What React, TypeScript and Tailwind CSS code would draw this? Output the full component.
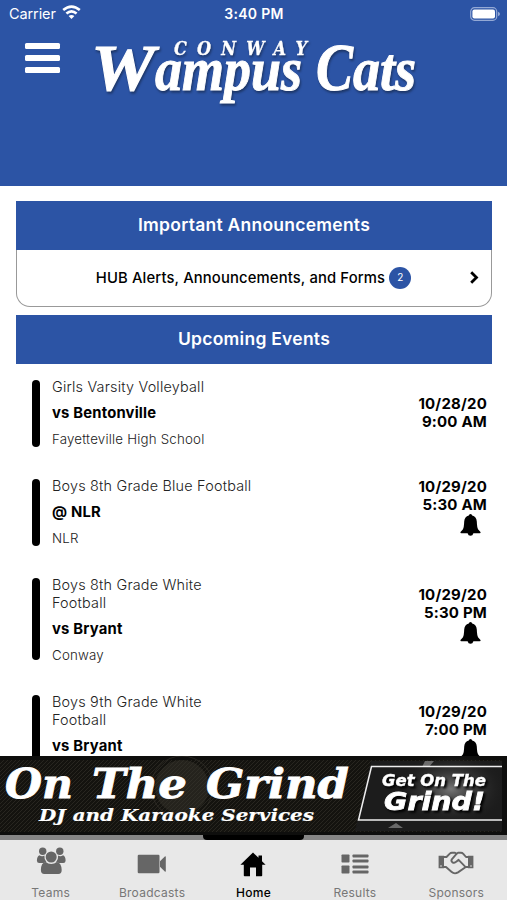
const EVENTS = [
  { title: 'Girls Varsity Volleyball', opponent: 'vs Bentonville', place: 'Fayetteville High School', date: '10/28/20', time: '9:00 AM', bell: false },
  { title: 'Boys 8th Grade Blue Football', opponent: '@ NLR', place: 'NLR', date: '10/29/20', time: '5:30 AM', bell: true },
  { title: 'Boys 8th Grade White Football', opponent: 'vs Bryant', place: 'Conway', date: '10/29/20', time: '5:30 PM', bell: true },
  { title: 'Boys 9th Grade White Football', opponent: 'vs Bryant', place: 'Conway', date: '10/29/20', time: '7:00 PM', bell: true },
]

const TABS = [
  { label: 'Teams', icon: TeamsIcon },
  { label: 'Broadcasts', icon: VideoIcon },
  { label: 'Home', icon: HomeIcon, active: true },
  { label: 'Results', icon: ListIcon },
  { label: 'Sponsors', icon: HandsIcon },
]

function TeamsIcon() {
  return (
    <svg className="-mt-1" width="30" height="28" viewBox="0 0 30 28" fill="currentColor">
      <circle cx="6.7" cy="4.2" r="3.7"/>
      <circle cx="23.8" cy="4.2" r="3.7"/>
      <path d="M3.4 8.3Q6 9.9 8.4 8.6Q8 12.4 10.4 15Q8.4 16 7.4 16.1H3.2Q1 16 .9 13.7Q.9 9.7 3.4 8.3Z"/>
      <path d="M27.1 8.3Q24.5 9.9 22.1 8.6Q22.5 12.4 20.1 15Q22.1 16 23.1 16.1H27.3Q29.5 16 29.6 13.7Q29.6 9.7 27.1 8.3Z"/>
      <circle cx="15.2" cy="10" r="5.5"/>
      <path d="M9.7 15.1Q12 17 15.2 17T20.7 15.1Q25.4 15.8 25.7 23Q25.7 27 22.3 27H8.3Q4.9 27 4.9 23Q5 15.8 9.7 15.1Z"/>
    </svg>
  )
}

function VideoIcon() {
  return (
    <svg className="mt-0.5" width="30" height="20" viewBox="0 0 30 20" fill="currentColor">
      <rect x=".7" y=".7" width="21.8" height="18.5" rx="1.2"/>
      <path d="M23 7.2L27.8 2.4Q28.8 1.8 28.8 3V17Q28.8 18.2 27.8 17.6L23 12.7Z"/>
    </svg>
  )
}

function HomeIcon() {
  return (
    <svg className="mt-[3px]" width="26" height="25" viewBox="0 0 26 25" fill="currentColor">
      <path d="M13 .5L18.5 5.8V3.6H22V9.2L25.6 12.8H22.2V23.5Q22.2 24.2 21.4 24.2H16V15.5H10V24.2H4.6Q3.8 24.2 3.8 23.5V12.8H.4Z"/>
    </svg>
  )
}

function ListIcon() {
  return (
    <svg className="mt-0.5" width="28" height="20" viewBox="0 0 28 20" fill="currentColor">
      <rect x=".5" y=".5" width="8" height="8" rx=".8"/>
      <rect x=".5" y="11.5" width="8" height="8" rx=".8"/>
      <rect x="11.5" y=".5" width="16" height="3" rx=".8"/>
      <rect x="11.5" y="5.5" width="16" height="3" rx=".8"/>
      <rect x="11.5" y="11.5" width="16" height="3" rx=".8"/>
      <rect x="11.5" y="16.5" width="16" height="3" rx=".8"/>
    </svg>
  )
}

function HandsIcon() {
  return (
    <svg width="36" height="24" viewBox="0 0 36 24" fill="none" stroke="currentColor" strokeWidth="1.9" strokeLinejoin="round" strokeLinecap="round">
      <path d="M.6 4.8H6V17.2H.6ZM30 4.8H35.4V17.2H30Z" fill="currentColor" stroke="none"/>
      <path d="M6 6H8.5L11.8 2.6Q12.6 1.8 14 1.8H17L18.5 2.8L20 1.8H23Q24.3 1.8 25.3 2.8L28 6H30"/>
      <path d="M6 16H8L13.4 20.8Q16.5 23.6 20 21.4L27.8 16H30"/>
      <path d="M18.5 2.8L13.8 8.3Q12.8 10 14.4 11.3Q16.6 12.4 18.3 10.7L20.6 8.8L27.4 15.8"/>
      <circle cx="3" cy="15" r=".8" fill="#e8e8e8" stroke="none"/>
      <circle cx="33" cy="15" r=".8" fill="#e8e8e8" stroke="none"/>
    </svg>
  )
}

function BellIcon() {
  return (
    <svg className="mr-[6px] mb-[9px]" width="21" height="22" viewBox="0 0 21 22">
      <path d="M10.5 0Q12 0 12.2 1.6Q16.4 2.8 16.8 7.5Q17 13.6 18.2 15.6L20.5 18Q21 19.2 19.6 19.2H13.4Q12.8 21.8 10.5 21.8T7.6 19.2H1.4Q0 19.2 .5 18L2.8 15.6Q4 13.6 4.2 7.5Q4.6 2.8 8.8 1.6Q9 0 10.5 0Z"/>
    </svg>
  )
}

function StatusBar() {
  return (
    <div className="grid h-7 grid-cols-3 items-center pl-[9px] pr-[7px] text-sm tracking-[0.3px]">
      <div className="flex items-center gap-1.5">
        <span className="text-[14.5px] tracking-[-0.1px]">Carrier</span>
        <svg className="-mt-0.5" width="19" height="15" viewBox="0 0 19 15" fill="none" stroke="#fff" strokeWidth="2.6">
          <path d="M1.2 5.1Q9.5-2 17.8 5.1"/>
          <path d="M4.4 8.6Q9.5 4.2 14.6 8.6"/>
          <path d="M9.5 14L6.6 11Q9.5 8.9 12.4 11Z" fill="#fff" stroke="none"/>
        </svg>
      </div>
      <span className="pr-[1px] text-center font-semibold">3:40 PM</span>
      <svg className="justify-self-end" width="30" height="14" viewBox="0 0 30 14">
        <rect x=".7" y=".7" width="26" height="12.6" rx="3.8" fill="none" stroke="#94a9d5" strokeWidth="1.2"/>
        <rect x="2.4" y="2.4" width="22.6" height="9.2" rx="2" fill="#fff"/>
        <path d="M28 4.7Q30 5.5 30 7T28 9.3Z" fill="#94a9d5"/>
      </svg>
    </div>
  )
}

function Logo() {
  return (
    <svg className="drop-shadow-[1px_2px_1px_#1c3566]" width="344" height="82" viewBox="84 28 344 82" fill="#fff" stroke="#fff" fontFamily="'Liberation Serif', serif" fontWeight="700" fontStyle="italic">
      <text x="174" y="54.5" fontSize="18" strokeWidth=".3" fontFamily="'DejaVu Serif Condensed', 'DejaVu Serif', serif" textLength="133">CONWAY</text>
      <text x="91" y="90" fontSize="66" strokeWidth="1" textLength="64" lengthAdjust="spacingAndGlyphs">W</text>
      <text x="155" y="90" fontSize="62" strokeWidth="1" textLength="147" lengthAdjust="spacingAndGlyphs">ampus</text>
      <text x="316" y="90" fontSize="68" strokeWidth="1" textLength="37" lengthAdjust="spacingAndGlyphs">C</text>
      <text x="353" y="90" fontSize="62" strokeWidth="1" textLength="63" lengthAdjust="spacingAndGlyphs">ats</text>
    </svg>
  )
}

function SectionTitle({ children }: { children: React.ReactNode }) {
  return <h2 className="flex h-[48.5px] items-center justify-center bg-[#2c54a5] text-[17.5px] font-semibold tracking-[0.25px] text-white">{children}</h2>
}

function EventRow({ event }: { event: (typeof EVENTS)[number] }) {
  const twoLines = event.title.length > 28
  return (
    <div className="flex text-[14.4px] leading-[18px] tracking-[0.2px]">
      <div className={`mt-0.5 w-2 flex-shrink-0 rounded-full bg-black ${twoLines?'mb-1':'mb-px'}`}/>
      <div className="ml-3 flex w-[202px] flex-col gap-2 text-[#222]">
        <p className="font-light">{event.title}</p>
        <p className="text-[14.8px] font-bold text-black">{event.opponent}</p>
        <p className="text-[13.3px] font-light">{event.place}</p>
      </div>
      <div className="ml-auto flex flex-col items-end justify-center text-[15px] font-bold text-black">
        <span>{event.date}</span>
        <span>{event.time}</span>
        {event.bell&&<BellIcon/>}
      </div>
    </div>
  )
}

function Banner() {
  return (
    <svg className="block flex-shrink-0" width="507" height="79" viewBox="0 756 507 79">
      <defs>
        <pattern id="weave" width="4" height="4" patternUnits="userSpaceOnUse">
          <rect width="4" height="4" fill="#14130f"/>
          <path d="M-1 1L1-1M0 4L4 0M3 5L5 3" stroke="#2d2b24" strokeWidth=".8"/>
        </pattern>
        <radialGradient id="glow">
          <stop offset="0" stopColor="#777"/>
          <stop offset="1" stopColor="#222" stopOpacity="0"/>
        </radialGradient>
      </defs>
      <rect y="756" width="507" height="79" fill="#0e0e0d"/>
      <rect y="760" width="502" height="72" fill="url(#weave)"/>
      <circle cx="182" cy="787" r="27" fill="#35332b" opacity=".5"/>
      <circle cx="182" cy="787" r="31" fill="none" stroke="#38362e" opacity=".6"/>
      <path d="M371 761H502V831H355Z" fill="#1c1c1c"/>
      <ellipse cx="451" cy="789" rx="54" ry="36" fill="url(#glow)"/>
      <path d="M425 761h9l-5 6h-7ZM388 828l8-5 7 5Z" fill="#aaa" opacity=".55"/>
      <path d="M502 766.5H371.5L358.5 820H502" fill="none" stroke="#eee" strokeWidth="1.5"/>
      <g fill="#fff" stroke="#fff" fontWeight="700" fontStyle="italic" fontFamily="'DejaVu Serif', serif">
        <text x="5" y="798" fontSize="41" strokeWidth=".8" textLength="68" lengthAdjust="spacingAndGlyphs">On</text>
        <text x="92" y="798" fontSize="41" strokeWidth=".8" textLength="95" lengthAdjust="spacingAndGlyphs">The</text>
        <text x="206" y="798" fontSize="41" strokeWidth=".8" textLength="143" lengthAdjust="spacingAndGlyphs">Grind</text>
        <text x="39" y="821" fontSize="17" strokeWidth=".2" textLength="275" lengthAdjust="spacingAndGlyphs">DJ and Karaoke Services</text>
      </g>
      <g fill="#fff" stroke="#fff" fontWeight="700" fontStyle="italic" fontFamily="'DejaVu Sans', sans-serif" className="drop-shadow-[2px_2px_1px_#000]">
        <text x="382" y="786" fontSize="15.5" strokeWidth=".4" textLength="104" lengthAdjust="spacingAndGlyphs">Get On The</text>
        <text x="384" y="810" fontSize="25" strokeWidth=".8" textLength="101" lengthAdjust="spacingAndGlyphs">Grind!</text>
      </g>
    </svg>
  )
}

export default function App() {
  return (
    <div className="flex h-[900px] w-[507px] flex-col overflow-hidden bg-white font-['Inter',sans-serif]">
      <header className="h-[185.5px] flex-shrink-0 bg-[#2c54a5] text-white">
        <StatusBar/>
        <div className="flex pl-[25px]">
          <button className="mr-6 mt-[15px] flex h-[30px] w-[35px] flex-shrink-0 flex-col justify-between" aria-label="Menu">
            <span className="h-[6px] w-full rounded-[1.5px] bg-white"/>
            <span className="h-[6px] w-full rounded-[1.5px] bg-white"/>
            <span className="h-[6px] w-full rounded-[1.5px] bg-white"/>
          </button>
          <Logo/>
        </div>
      </header>

      <main className="min-h-0 flex-1 overflow-hidden pl-4 pr-[15px] pt-[15.5px]">
        <SectionTitle>Important Announcements</SectionTitle>
        <div className="mb-2 flex h-[57.5px] items-center rounded-b-[14px] border border-t-0 border-[#999] pr-3">
          <div className="ml-[20px] flex flex-1 items-center justify-center gap-1">
            <span className="text-[14.8px] font-medium tracking-[0.14px] text-black">HUB Alerts, Announcements, and Forms</span>
            <span className="flex size-[22px] items-center justify-center rounded-full bg-[#2c54a5] text-[10px] text-white">2</span>
          </div>
          <svg width="9" height="13" viewBox="0 0 9 13" fill="none" stroke="#000" strokeWidth="2.8">
            <path d="M1.2 1.2L6.5 6.5L1.2 11.8"/>
          </svg>
        </div>
        <SectionTitle>Upcoming Events</SectionTitle>
        <div className="flex flex-col gap-[29px] pl-4 pr-[5px] pt-[14.4px]">
          {EVENTS.map((e,i)=><EventRow key={i} event={e}/>)}
        </div>
      </main>

      <Banner/>
      <div className="flex h-[5px] flex-shrink-0 justify-center bg-[#858585]">
        <div className="w-[101px] rounded-b-sm bg-black"/>
      </div>
      <nav className="grid h-[60px] flex-shrink-0 grid-cols-5 bg-[#e8e8e8]">
        {TABS.map(tab=>(
          <div key={tab.label} className={`flex flex-col items-center ${tab.active?'text-black':'text-[#666]'}`}>
            <div className="flex h-[45px] items-center justify-center"><tab.icon/></div>
            <span className={`text-xs leading-[15px] tracking-[0.25px] ${tab.active?'font-medium':'text-[#777]'}`}>{tab.label}</span>
          </div>
        ))}
      </nav>
    </div>
  )
}
